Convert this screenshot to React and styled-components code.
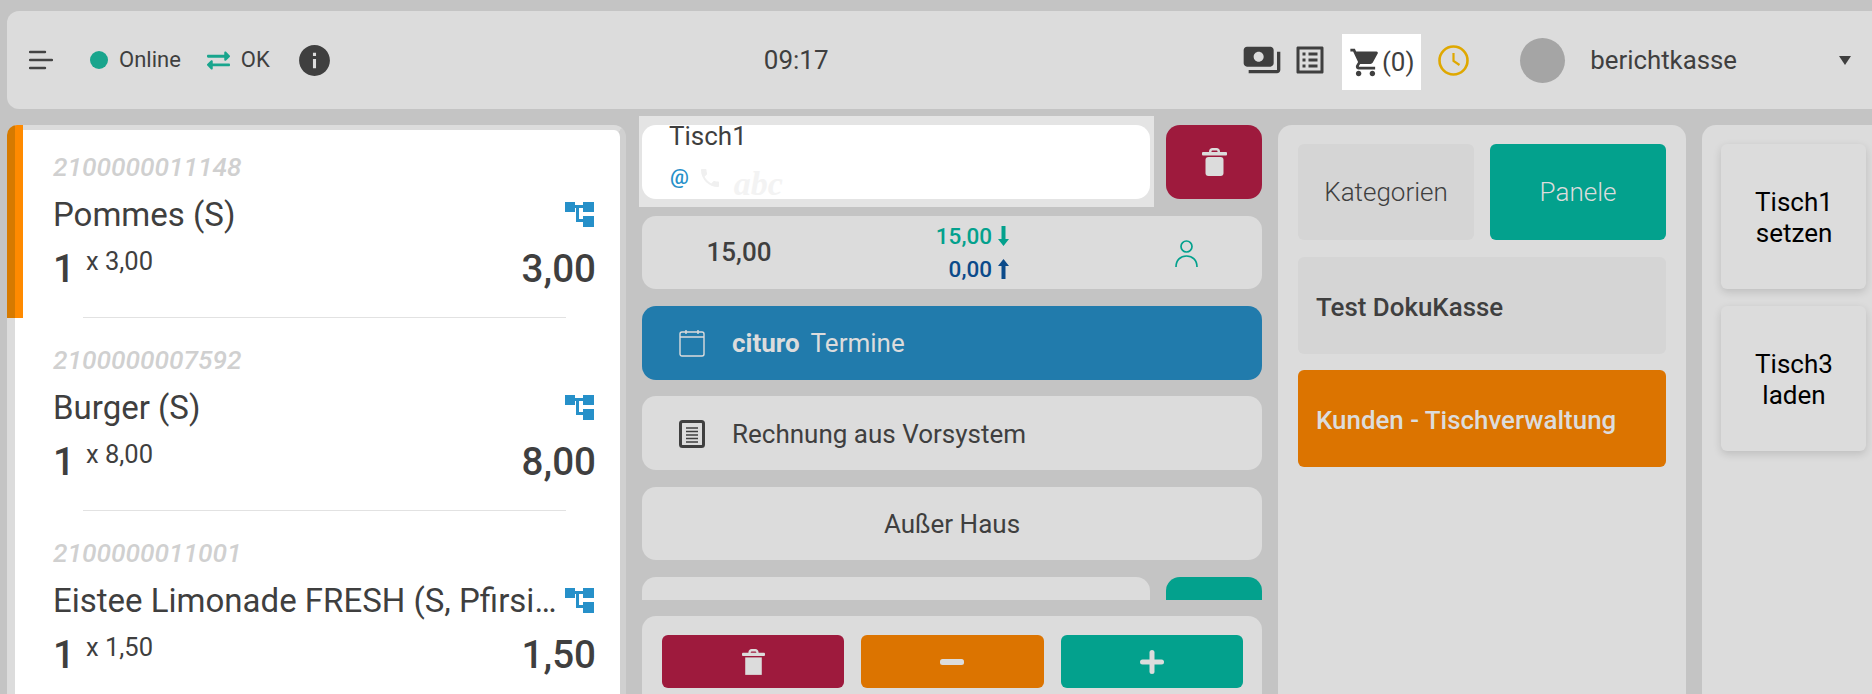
import React from 'react';
import styled, { createGlobalStyle } from 'styled-components';
import {
  MdInfo,
  MdListAlt,
  MdPayments,
  MdPhone,
  MdShoppingCart,
} from 'react-icons/md';
import { FaExchangeAlt } from 'react-icons/fa';

const items = [
  { code: '2100000011148', name: 'Pommes (S)', unit: '3,00', total: '3,00', active: true },
  { code: '2100000007592', name: 'Burger (S)', unit: '8,00', total: '8,00' },
  { code: '2100000011001', name: 'Eistee Limonade FRESH (S, Pfirsich)', unit: '1,50', total: '1,50' },
];

const VariantIcon = () => (
  <svg width="29" height="25" viewBox="0 0 29 25" fill="#2690c9">
    <rect x="0" y="0" width="10" height="10" />
    <rect x="18" y="0" width="11" height="10" />
    <rect x="18" y="14" width="11" height="11" />
    <path d="M10 3h8v3h-4v11h4v3h-7V6h-1z" />
  </svg>
);

const CalendarIcon = () => (
  <svg width="26" height="28" viewBox="0 0 26 28" fill="none" stroke="#dcdcdc" strokeWidth="1.4">
    <rect x="1" y="3" width="24" height="24" rx="2" />
    <path d="M1 8h24M7 1v4M19 1v4" />
  </svg>
);

const InvoiceIcon = () => (
  <svg width="26" height="28" viewBox="0 0 26 28" fill="none" stroke="#3f3f3f">
    <rect x="1.5" y="1.5" width="23" height="25" rx="2" strokeWidth="3" />
    <path d="M7 8h12M7 11.5h12M7 15h12M7 18.5h12M7 22h12" strokeWidth="1.5" />
  </svg>
);

const PersonIcon = () => (
  <svg width="23" height="28" viewBox="0 0 23 28" fill="none" stroke="#03a18d" strokeWidth="1.7">
    <circle cx="11.5" cy="6.5" r="5.5" />
    <path d="M1 27c0-7 4.500-11 10.500-11S22 20 22 27" />
  </svg>
);

const HamburgerIcon = () => (
  <svg width="24" height="20" viewBox="0 0 24 20" stroke="#444" strokeWidth="2.4" strokeLinecap="round">
    <path d="M1 2h15M1 10h22M1 18h15" />
  </svg>
);

const ClockIcon = () => (
  <svg width="31" height="31" viewBox="0 0 31 31" fill="none" stroke="#dfa800" strokeWidth="2.6">
    <circle cx="15.500" cy="15.500" r="14" />
    <path d="M15.500 8v8l6 4" strokeWidth="2.2" />
  </svg>
);

const MinusIcon = () => (
  <svg width="24" height="6" viewBox="0 0 24 6" fill="#dcdcdc">
    <rect width="24" height="6" rx="2.500" />
  </svg>
);

const PlusIcon = () => (
  <svg width="24" height="24" viewBox="0 0 24 24" fill="#dcdcdc">
    <rect y="9.500" width="24" height="5" rx="2.500" />
    <rect x="9.500" width="5" height="24" rx="2.500" />
  </svg>
);

const TrashIcon = ({ width, height, rounded }) => (
  <svg width={width} height={height} viewBox="0 0 25 28" fill="#dcdcdc">
    <path d="M7 5V3.500C7 1.500 8.500 0 10.500 0h4C16.500 0 18 1.500 18 3.500V5h-2.500V3.500c0-.6-.4-1-1-1h-4c-.6 0-1 .4-1 1V5z" />
    <rect x="0" y="4" width="25" height="3.500" rx="1" />
    <rect x="3.500" y="9" width="18" height="19" rx={rounded ? 3 : 0} />
  </svg>
);

const ArrowDown = () => (
  <svg width="11" height="20" viewBox="0 0 11 20" fill="currentColor">
    <path d="M3.500 0h4v13H11l-5.500 7L0 13h3.500z" />
  </svg>
);

const ArrowUp = () => (
  <svg width="11" height="20" viewBox="0 0 11 20" fill="currentColor">
    <path d="M3.500 20h4V7H11L5.500 0 0 7h3.500z" />
  </svg>
);

const App = () => {
  return (
    <>
      <GlobalStyle />
      <Page>
        <TopBar>
          <MenuButton><HamburgerIcon /></MenuButton>
          <StatusDot />
          <StatusText>Online</StatusText>
          <SyncIcon><FaExchangeAlt size={23} /></SyncIcon>
          <StatusText>OK</StatusText>
          <InfoIcon><MdInfo size={37} /></InfoIcon>
          <Time>09:17</Time>
          <ToolIcon><MdPayments size={40} /></ToolIcon>
          <ToolIcon><MdListAlt size={36} /></ToolIcon>
          <CartBox>
            <MdShoppingCart size={33} />
            <span>(0)</span>
          </CartBox>
          <ClockBox><ClockIcon /></ClockBox>
          <Avatar />
          <UserName>berichtkasse</UserName>
          <Caret />
        </TopBar>

        <Columns>
          <ItemPanel>
            <OrangeMark />
            {items.map((item) => (
              <Item key={item.code}>
                <ItemCode>{item.code}</ItemCode>
                <NameRow>
                  <ItemName>{item.name}</ItemName>
                  <VariantIcon />
                </NameRow>
                <QtyRow>
                  <Qty>1</Qty>
                  <UnitPrice>x {item.unit}</UnitPrice>
                  <Total>{item.total}</Total>
                </QtyRow>
              </Item>
            ))}
          </ItemPanel>

          <CenterColumn>
            <ScrollArea>
              <InputRow>
                <FocusRing>
                  <TableInput>
                    <TableName>Tisch1</TableName>
                    <InputIcons>
                      <AtSign>@</AtSign>
                      <FaintPhone><MdPhone size={24} /></FaintPhone>
                      <FaintText>abc</FaintText>
                    </InputIcons>
                  </TableInput>
                </FocusRing>
                <SquareButton $color="#9e1a3d"><TrashIcon width={25} height={28} rounded /></SquareButton>
              </InputRow>

              <SumRow>
                <SumTotal>15,00</SumTotal>
                <SumSplit>
                  <SplitLine $color="#03a18d">15,00<ArrowDown /></SplitLine>
                  <SplitLine $color="#0b4a8a">0,00<ArrowUp /></SplitLine>
                </SumSplit>
                <SumPerson><PersonIcon /></SumPerson>
              </SumRow>

              <ActionRow $bg="#217bac" $color="#dcdcdc">
                <ActionIcon><CalendarIcon /></ActionIcon>
                <strong>cituro</strong>
                <TermineText>Termine</TermineText>
              </ActionRow>

              <ActionRow>
                <ActionIcon><InvoiceIcon /></ActionIcon>
                <span>Rechnung aus Vorsystem</span>
              </ActionRow>

              <ActionRow $center>
                <span>Außer Haus</span>
              </ActionRow>

              <InputRow>
                <BlankField />
                <SquareButton $color="#03a18d" />
              </InputRow>
            </ScrollArea>

            <BottomPanel>
              <QtyButton $color="#9e1a3d"><TrashIcon width={23} height={26} /></QtyButton>
              <QtyButton $color="#dc7400"><MinusIcon /></QtyButton>
              <QtyButton $color="#03a18d"><PlusIcon /></QtyButton>
            </BottomPanel>
          </CenterColumn>

          <CategoryPanel>
            <TabGrid>
              <Tab>Kategorien</Tab>
              <Tab $active>Panele</Tab>
            </TabGrid>
            <PanelButton>Test DokuKasse</PanelButton>
            <PanelButton $orange>Kunden - Tischverwaltung</PanelButton>
          </CategoryPanel>

          <TablePanel>
            <TableCard>Tisch1<br />setzen</TableCard>
            <TableCard>Tisch3<br />laden</TableCard>
          </TablePanel>
        </Columns>
      </Page>
    </>
  );
};

const GlobalStyle = createGlobalStyle`
  html, body {
    margin: 0;
    padding: 0;
    height: 100%;
    overflow: hidden;
    background: #c4c4c4;
  }
  body {
    font-family: Roboto, "Liberation Sans", sans-serif;
    color: #3f3f3f;
  }
  * {
    box-sizing: border-box;
  }
`;

const Page = styled.div`
  height: 100vh;
  display: flex;
  flex-direction: column;
  padding: 11px 0 0 7px;
  overflow: hidden;
`;

const TopBar = styled.header`
  height: 98px;
  flex-shrink: 0;
  display: flex;
  align-items: center;
  padding-left: 22px;
  background: #dcdcdc;
  border-radius: 12px 0 0 12px;
`;

const MenuButton = styled.div`
  display: flex;
  width: 24px;
`;

const StatusDot = styled.span`
  width: 18px;
  height: 18px;
  margin: 0 11px 0 37px;
  border-radius: 50%;
  background: #19a58d;
`;

const StatusText = styled.span`
  font-size: 22px;
  line-height: 24px;
`;

const SyncIcon = styled.span`
  display: flex;
  margin: 0 11px 0 26px;
  color: #19a58d;
`;

const InfoIcon = styled.span`
  display: flex;
  margin-left: 26px;
  color: #3f3f3f;
`;

const Time = styled.span`
  margin: 0 auto 0 431px;
  font-size: 26px;
`;

const ToolIcon = styled.span`
  display: flex;
  margin-right: 10px;
  color: #3f3f3f;
`;

const CartBox = styled.div`
  width: 79px;
  height: 56px;
  margin: 4px 0 0 4px;
  display: flex;
  align-items: center;
  justify-content: center;
  background: #fff;
  font-size: 26px;
`;

const ClockBox = styled.span`
  display: flex;
  margin-left: 17px;
`;

const Avatar = styled.span`
  width: 45px;
  height: 45px;
  margin-left: 51px;
  border-radius: 50%;
  background: #a5a5a5;
`;

const UserName = styled.span`
  margin-left: 25px;
  font-size: 25.8px;
`;

const Caret = styled.span`
  width: 0;
  height: 0;
  margin: 0 21px 0 102px;
  border-left: 6px solid transparent;
  border-right: 6px solid transparent;
  border-top: 9px solid #3f3f3f;
`;

const Columns = styled.main`
  flex: 1;
  min-height: 0;
  margin-top: 16px;
  display: grid;
  grid-template-columns: 619px 620px 408px 1fr;
  column-gap: 16px;
`;

const ItemPanel = styled.section`
  position: relative;
  background: #fff;
  border-style: solid;
  border-color: #dcdcdc #d0d0d0 #dcdcdc #dcdcdc;
  border-width: 5px 6px 0 8px;
  border-radius: 12px 12px 0 0;
`;

const OrangeMark = styled.span`
  position: absolute;
  left: -8px;
  top: -5px;
  width: 16px;
  height: 193px;
  border-radius: 10px 0 0 0;
  background: linear-gradient(90deg, #d67a00 8px, #ff8a00 8px);
`;

const Item = styled.article`
  position: relative;
  height: 193px;
  padding: 27px 24px 0 38px;

  &:nth-child(2) {
    height: 188px;
    padding-top: 22px;
  }

  &::after {
    content: '';
    position: absolute;
    left: 68px;
    right: 54px;
    bottom: 0;
    height: 1px;
    background: #e2e2e2;
  }
  &:last-child::after {
    display: none;
  }
`;

const ItemCode = styled.div`
  font-size: 26.3px;
  line-height: 30px;
  font-style: italic;
  font-weight: 500;
  color: #d0d0d0;
`;

const NameRow = styled.div`
  margin-top: 12px;
  display: flex;
  align-items: center;
  justify-content: space-between;
  gap: 6px;
  height: 40px;
  padding-right: 2px;
`;

const ItemName = styled.div`
  flex: 1;
  min-width: 0;
  padding-top: 2px;
  font-size: 33px;
  line-height: 40px;
  white-space: nowrap;
  overflow: hidden;
  text-overflow: ellipsis;
`;

const QtyRow = styled.div`
  margin-top: 12px;
  display: flex;
  align-items: flex-start;
  height: 46px;
`;

const Qty = styled.span`
  font-size: 38.6px;
  line-height: 46px;
  font-weight: 500;
  width: 33px;
`;

const UnitPrice = styled.span`
  font-size: 25.5px;
  line-height: 30px;
`;

const Total = styled.span`
  margin-left: auto;
  font-size: 38.6px;
  line-height: 46px;
  font-weight: 500;
`;

const CenterColumn = styled.section`
  display: flex;
  flex-direction: column;
  min-height: 0;
`;

const ScrollArea = styled.div`
  height: 484px;
  flex-shrink: 0;
  margin: -9px 0 0 -3px;
  padding: 9.200px 0 0 3px;
  display: flex;
  flex-direction: column;
  gap: 16.800px;
  overflow: hidden;
`;

const InputRow = styled.div`
  display: flex;
  gap: 16px;
  height: 73.600px;
  flex-shrink: 0;
`;

const FocusRing = styled.div`
  flex: 1;
  margin: -9px -4px -8px -3px;
  padding: 9px 4px 8px 3px;
  background: #e4e4e4;
`;

const TableInput = styled.div`
  height: 100%;
  padding-left: 27px;
  background: #fff;
  border-radius: 14px;
`;

const TableName = styled.div`
  font-size: 26px;
  line-height: 22px;
`;

const InputIcons = styled.div`
  margin-top: 18px;
  display: flex;
  align-items: flex-start;
`;

const AtSign = styled.span`
  margin-left: 1px;
  font-size: 21px;
  line-height: 24px;
  font-weight: 500;
  color: #2690c9;
`;

const FaintPhone = styled.span`
  display: flex;
  margin: 1px 12px 0 9px;
  color: #f0f0f0;
`;

const FaintText = styled.span`
  margin-top: 1px;
  font-family: "Liberation Serif", serif;
  font-size: 34px;
  line-height: 36px;
  font-style: italic;
  font-weight: 700;
  color: #f3f3f3;
`;

const SquareButton = styled.div`
  width: 96px;
  flex-shrink: 0;
  display: flex;
  align-items: center;
  justify-content: center;
  background: ${(props) => props.$color};
  border-radius: 14px;
`;

const SumRow = styled.div`
  height: 73.600px;
  flex-shrink: 0;
  display: grid;
  grid-template-columns: 194px 1fr 120px;
  align-items: center;
  background: #dcdcdc;
  border-radius: 14px;
`;

const SumTotal = styled.div`
  text-align: center;
  font-size: 26px;
  font-weight: 500;
`;

const SumSplit = styled.div`
  display: flex;
  flex-direction: column;
  align-items: flex-end;
  padding-right: 133px;
  gap: 6px;
`;

const SplitLine = styled.div`
  display: flex;
  align-items: center;
  gap: 6px;
  height: 27px;
  font-size: 22.500px;
  font-weight: 500;
  color: ${(props) => props.$color};
`;

const SumPerson = styled.div`
  display: flex;
  justify-content: center;
  padding-right: 32px;
  padding-top: 3px;
`;

const ActionRow = styled.div`
  height: 73.600px;
  flex-shrink: 0;
  display: flex;
  align-items: center;
  justify-content: ${(props) => (props.$center ? 'center' : 'flex-start')};
  padding: ${(props) => (props.$center ? '0' : props.$bg ? '0 0 0 37px' : '2px 0 0 37px')};
  background: ${(props) => props.$bg || '#dcdcdc'};
  color: ${(props) => props.$color || '#3f3f3f'};
  border-radius: 14px;
  font-size: 26px;
`;

const ActionIcon = styled.span`
  display: flex;
  margin-right: 27px;
`;

const TermineText = styled.span`
  margin-left: 11px;
`;

const BlankField = styled.div`
  flex: 1;
  background: #dcdcdc;
  border-radius: 14px;
`;

const BottomPanel = styled.div`
  flex: 1;
  min-height: 0;
  margin-top: 16px;
  padding: 19px 19px 0 20px;
  display: grid;
  grid-template-columns: repeat(3, 1fr);
  grid-auto-rows: 53px;
  column-gap: 17px;
  background: #dcdcdc;
  border-radius: 14px 14px 0 0;
`;

const QtyButton = styled.div`
  display: flex;
  align-items: center;
  justify-content: center;
  background: ${(props) => props.$color};
  border-radius: 6px;
`;

const CategoryPanel = styled.section`
  display: flex;
  flex-direction: column;
  gap: 16px;
  padding: 19px 20px 0;
  background: #dcdcdc;
  border-radius: 14px 14px 0 0;
`;

const TabGrid = styled.div`
  display: grid;
  grid-template-columns: 1fr 1fr;
  gap: 16px;
  margin-bottom: 1px;
`;

const Tab = styled.div`
  height: 96px;
  display: flex;
  align-items: center;
  justify-content: center;
  font-size: 26px;
  font-weight: 300;
  border-radius: 6px;
  background: ${(props) => (props.$active ? '#03a18d' : '#d5d5d5')};
  color: ${(props) => (props.$active ? '#dcdcdc' : '#3f3f3f')};
`;

const PanelButton = styled.div`
  height: 97px;
  display: flex;
  align-items: center;
  padding: 2px 0 0 18px;
  font-size: 25.9px;
  font-weight: 500;
  border-radius: 6px;
  background: ${(props) => (props.$orange ? '#dc7400' : '#d5d5d5')};
  color: ${(props) => (props.$orange ? '#dcdcdc' : '#3f3f3f')};
`;

const TablePanel = styled.section`
  display: flex;
  flex-direction: column;
  gap: 17px;
  padding: 19px 6px 0 19px;
  background: #dcdcdc;
  border-radius: 14px 0 0 0;
`;

const TableCard = styled.div`
  height: 145px;
  padding: 43px 0 0 1px;
  text-align: center;
  font-size: 26px;
  line-height: 31px;
  color: #000;
  background: #dcdcdc;
  border-radius: 6px;
  box-shadow: 0 3px 8px rgba(0, 0, 0, 0.14);
`;

export default App;
